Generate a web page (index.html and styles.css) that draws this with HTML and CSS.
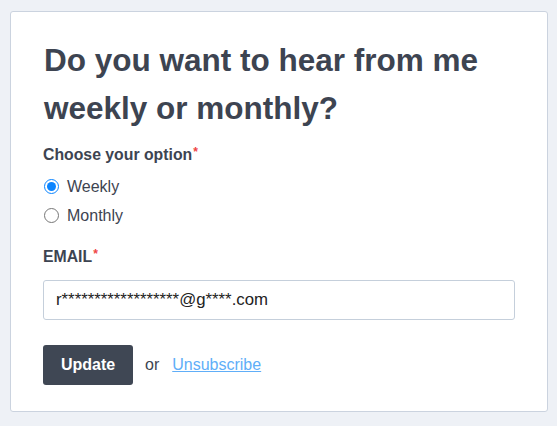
FILE: index.html
```html
<!DOCTYPE html>
<html lang="en">
  <head>
    <meta charset="UTF-8" />
    <meta name="viewport" content="width=device-width, initial-scale=1" />
    <title>Email Preferences</title>
    <link rel="stylesheet" href="styles.css">
  </head>
  <body>
    <div class="card">
      <h1>Do you want to hear from me weekly or monthly?</h1>
      <form class="prefs">
        <div class="field">
          <span class="label">Choose your option<span class="req">*</span></span>
          <label class="option">
            <input type="radio" name="freq" value="weekly" checked />
            Weekly
          </label>
          <label class="option">
            <input type="radio" name="freq" value="monthly" />
            Monthly
          </label>
        </div>

        <div class="field">
          <label class="label" for="email">EMAIL<span class="req">*</span></label>
          <input type="email" id="email" class="text-input" value="r******************@g****.com" />
        </div>

        <div class="actions">
          <button type="submit">Update</button>
          <span class="or">or</span>
          <a href="#" class="unsub">Unsubscribe</a>
        </div>
      </form>
    </div>
  </body>
</html>
```

FILE: styles.css
```css
body {
  font-family: "Liberation Sans", Arial, sans-serif;
  background: #eef1f6;
  margin: 0;
  padding: 11px 9px 0 10px;
  color: #3d4451;
}

.card {
  background: white;
  border: 1px solid #cbd3df;
  border-radius: 3px;
  padding: 24px 32px 26px 32px;
}

h1 {
  font-size: 31.5px;
  line-height: 48px;
  font-weight: 700;
  margin: 0 0 11px 1px;
  color: #3d4451;
}

.field {
  margin-bottom: 15px;
}

.label {
  display: block;
  font-size: 15.8px;
  font-weight: 700;
  line-height: 24px;
  margin-bottom: 5px;
}

.req {
  color: #ef4444;
  font-size: 12px;
  vertical-align: top;
  line-height: 18px;
  margin-left: 1px;
}

.option {
  display: flex;
  align-items: center;
  gap: 8px;
  font-size: 16px;
  line-height: 29px;
}

.option input {
  width: 15px;
  height: 15px;
  margin: 0 0 0 1px;
  accent-color: #0a84ff;
}

.text-input {
  width: 100%;
  box-sizing: border-box;
  height: 40px;
  padding: 0 10px 0 12px;
  border: 1px solid #c5cfdb;
  border-radius: 3px;
  font-size: 16.8px;
  font-family: inherit;
  color: #222;
  margin-top: 6px;
}

.actions {
  display: flex;
  align-items: center;
  margin-top: 25px;
}

button {
  width: 90px;
  height: 40px;
  background: #3f4754;
  border: none;
  border-radius: 3px;
  color: white;
  font-size: 16px;
  font-weight: 700;
  font-family: inherit;
  cursor: pointer;
}

.or {
  font-size: 16px;
  margin: 0 13px 0 12px;
}

.unsub {
  font-size: 16px;
  color: #60aef8;
}
```
